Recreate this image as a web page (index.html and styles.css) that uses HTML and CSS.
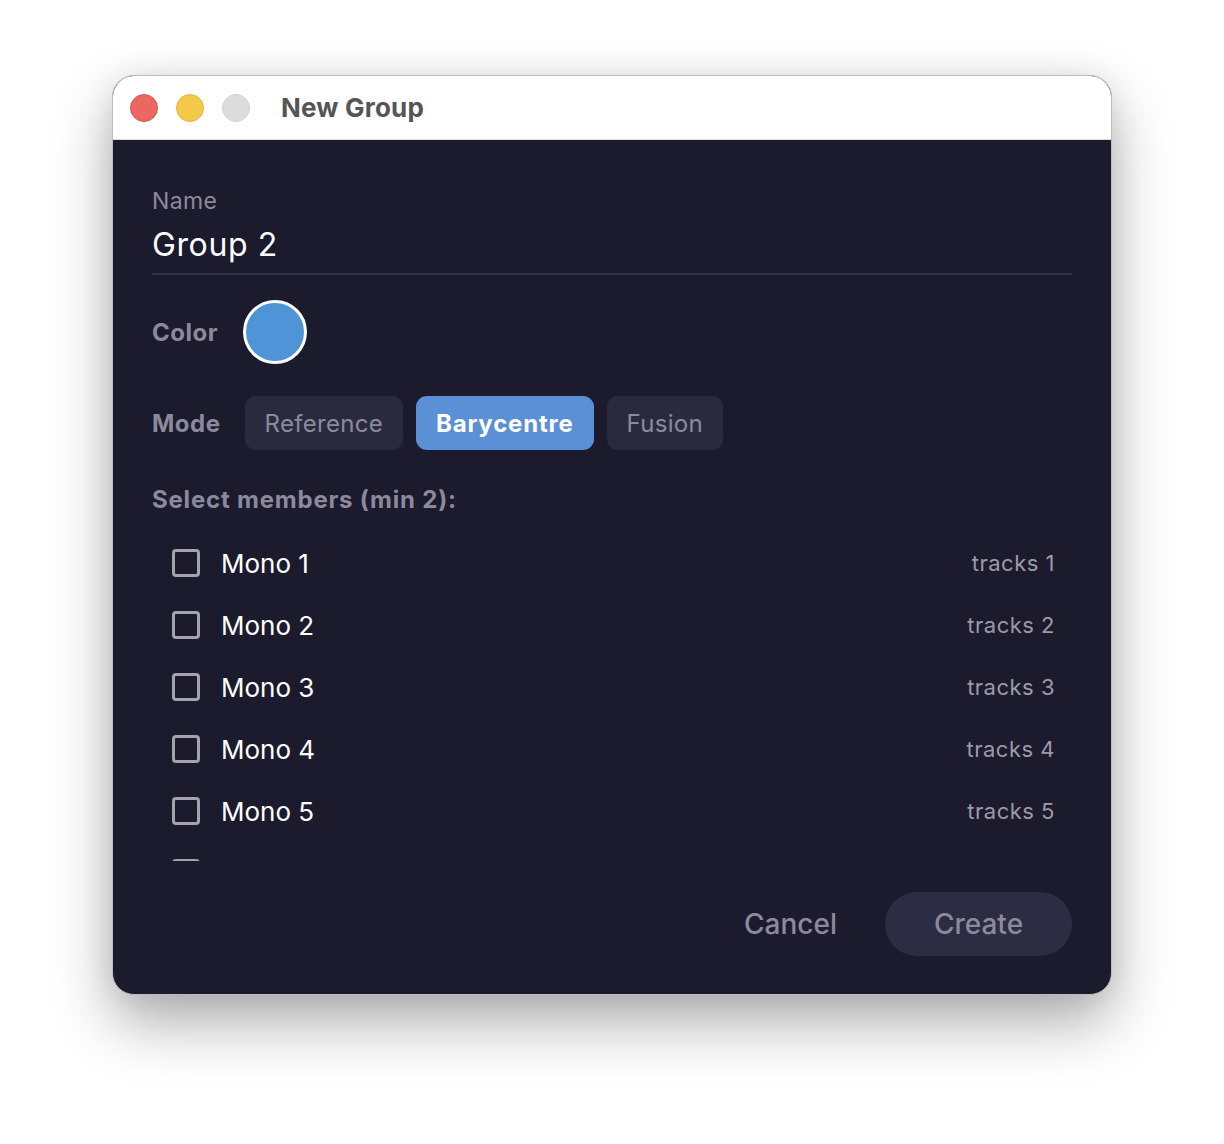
FILE: index.html
```html
<!DOCTYPE html>
<html>
<head>
<meta charset="utf-8">
<link rel="stylesheet" href="styles.css">
</head>
<body>
<div class="window">
  <div class="titlebar">
    <div class="lights">
      <span class="light red"></span>
      <span class="light yellow"></span>
      <span class="light gray"></span>
    </div>
    <div class="title">New Group</div>
  </div>
  <div class="content">
    <div class="field">
      <div class="field-label">Name</div>
      <div class="field-value">Group 2</div>
    </div>
    <div class="row color-row">
      <div class="row-label">Color</div>
      <div class="swatch"></div>
    </div>
    <div class="row mode-row">
      <div class="row-label">Mode</div>
      <div class="seg">
        <div class="seg-btn">Reference</div>
        <div class="seg-btn active">Barycentre</div>
        <div class="seg-btn">Fusion</div>
      </div>
    </div>
    <div class="members-label">Select members (min 2):</div>
    <div class="list">
      <div class="item"><span class="check"></span><span class="item-name">Mono 1</span><span class="item-meta">tracks 1</span></div>
      <div class="item"><span class="check"></span><span class="item-name">Mono 2</span><span class="item-meta">tracks 2</span></div>
      <div class="item"><span class="check"></span><span class="item-name">Mono 3</span><span class="item-meta">tracks 3</span></div>
      <div class="item"><span class="check"></span><span class="item-name">Mono 4</span><span class="item-meta">tracks 4</span></div>
      <div class="item"><span class="check"></span><span class="item-name">Mono 5</span><span class="item-meta">tracks 5</span></div>
      <div class="item"><span class="check"></span><span class="item-name">Mono 6</span><span class="item-meta">tracks 6</span></div>
    </div>
    <div class="actions">
      <div class="btn-cancel">Cancel</div>
      <div class="btn-create">Create</div>
    </div>
  </div>
</div>
</body>
</html>
```

FILE: styles.css
```css
html, body {
  margin: 0;
  padding: 0;
  background: #ffffff;
}
body {
  font-family: Inter, "Noto Sans", "Liberation Sans", sans-serif;
  padding: 75px 0 0 112px;
  height: 1144px;
  box-sizing: border-box;
}
.window {
  width: 1000px;
  height: 920px;
  box-sizing: border-box;
  border-radius: 22px;
  border: 1px solid #bdbdbd;
  overflow: hidden;
  background: #1c1b2d;
  box-shadow: 0 28px 60px rgba(0,0,0,0.32), 0 0 30px rgba(0,0,0,0.08);
  display: flex;
  flex-direction: column;
}
.titlebar {
  height: 63px;
  background: #ffffff;
  border-bottom: 1px solid #dedede;
  display: flex;
  align-items: center;
  padding-left: 17px;
  flex-shrink: 0;
}
.lights {
  display: flex;
  gap: 18px;
}
.light {
  width: 28px;
  height: 28px;
  border-radius: 50%;
  box-sizing: border-box;
}
.red { background: #ec6762; border: 1px solid #d95550; }
.yellow { background: #f4c94a; border: 1px solid #e0b53a; }
.gray { background: #dcdcdc; border: 1px solid #d0d0d0; }
.title {
  margin-left: 31px;
  font-size: 26px;
  font-weight: 700;
  color: #555555;
  letter-spacing: 0.2px;
}
.content {
  padding: 47px 39px 0 39px;
  display: flex;
  flex-direction: column;
  flex: 1;
}
.field {
  border-bottom: 2px solid #34334a;
  padding-bottom: 10px;
}
.field-label {
  font-size: 23px;
  color: #8b8a9c;
  line-height: 28px;
  letter-spacing: 0.4px;
}
.field-value {
  margin-top: 12px;
  font-size: 32px;
  color: #ffffff;
  line-height: 36px;
  letter-spacing: 0.6px;
}
.row {
  display: flex;
  align-items: center;
}
.row-label {
  font-size: 24px;
  font-weight: 700;
  color: #8b8a9c;
  letter-spacing: 0.5px;
}
.color-row {
  margin-top: 25px;
  gap: 25px;
}
.swatch {
  width: 64px;
  height: 64px;
  border-radius: 50%;
  box-sizing: border-box;
  border: 3px solid #ffffff;
  background: #4f94d6;
}
.mode-row {
  margin-top: 32px;
  gap: 24px;
}
.seg {
  display: flex;
  gap: 13px;
}
.seg-btn {
  height: 54px;
  padding: 0 20px;
  border-radius: 11px;
  background: #2a2a3f;
  color: #8b8a9c;
  font-size: 24px;
  letter-spacing: 0.3px;
  display: flex;
  align-items: center;
}
.seg-btn.active {
  background: #5b8fd6;
  color: #ffffff;
  font-weight: 700;
  letter-spacing: 0.8px;
}
.members-label {
  margin-top: 35px;
  font-size: 24px;
  font-weight: 700;
  color: #8b8a9c;
  line-height: 30px;
  letter-spacing: 0.8px;
}
.list {
  margin-top: 17px;
  height: 329px;
  overflow: hidden;
  padding: 0 17px 0 20px;
}
.item {
  height: 62px;
  display: flex;
  align-items: center;
}
.check {
  width: 28px;
  height: 28px;
  box-sizing: border-box;
  border: 3px solid #a3a2ad;
  border-radius: 4px;
  flex-shrink: 0;
}
.item-name {
  margin-left: 21px;
  font-size: 26px;
  color: #ffffff;
  flex: 1;
}
.item-meta {
  font-size: 22px;
  color: #9b9aa8;
  letter-spacing: 0.5px;
}
.actions {
  margin-top: 31px;
  display: flex;
  justify-content: flex-end;
  align-items: center;
  gap: 48px;
}
.btn-cancel {
  font-size: 28px;
  color: #8b8a9c;
  font-weight: 500;
}
.btn-create {
  width: 187px;
  height: 64px;
  border-radius: 32px;
  background: #2c2c42;
  color: #8b8a9c;
  font-size: 28px;
  font-weight: 500;
  display: flex;
  align-items: center;
  justify-content: center;
}
```
